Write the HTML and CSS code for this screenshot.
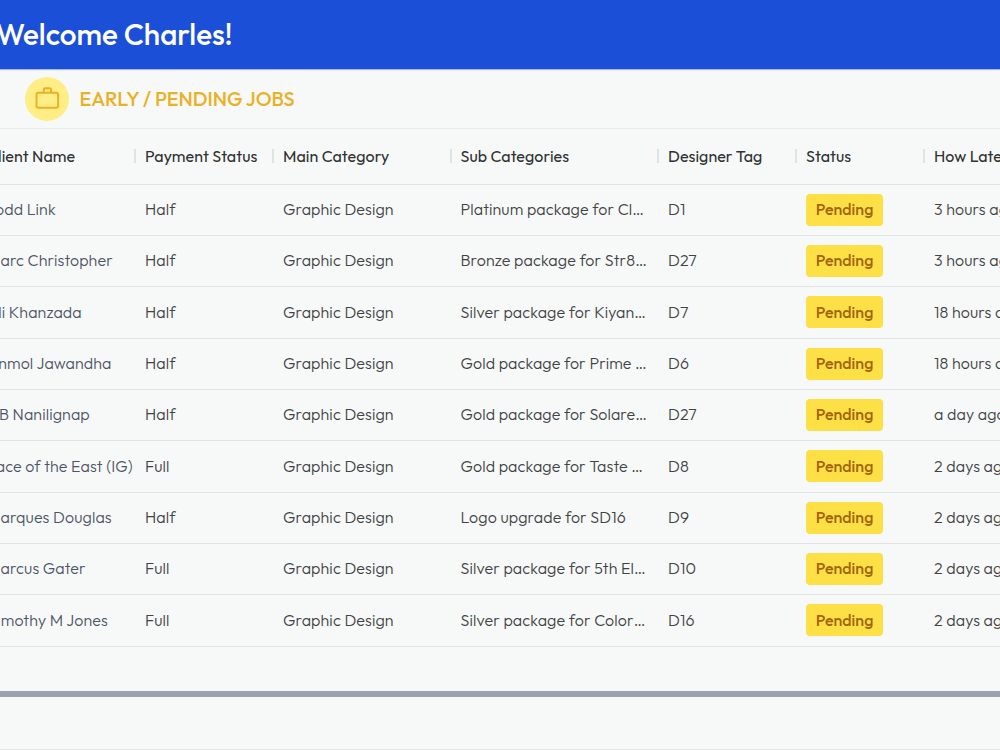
FILE: index.html
```html
<!DOCTYPE html>
<html lang="en">
	<head>
		<title>Early / Pending Jobs</title>
		<meta charset="utf-8">
		<meta name="viewport" content="width=device-width, initial-scale=1">
		<link rel="stylesheet" href="styles.css">
	</head>
	<body>
		<header class="topbar">
			<h1>Welcome Charles!</h1>
		</header>

		<main class="jobs">
			<div class="jobs-title">
				<span class="jobs-icon">
					<svg width="26" height="26" viewBox="0 0 26 26" fill="none" stroke="currentColor" stroke-width="2" stroke-linejoin="round">
						<rect x="2.5" y="6.8" width="21.6" height="15" rx="1.8"/>
						<path d="M9.8 6.6V3.4a1.2 1.2 0 0 1 1.2-1.2h4.8a1.2 1.2 0 0 1 1.2 1.2v3.2"/>
					</svg>
				</span>
				<h2>EARLY / PENDING JOBS</h2>
			</div>

			<div class="table">
				<div class="row head">
					<div class="client">Client Name</div>
					<div class="payment">Payment Status</div>
					<div class="category">Main Category</div>
					<div class="sub">Sub Categories</div>
					<div class="tag">Designer Tag</div>
					<div class="status">Status</div>
					<div class="late">How Late</div>
				</div>
				<div class="row">
					<div class="client">Todd Link</div>
					<div class="payment">Half</div>
					<div class="category">Graphic Design</div>
					<div class="sub">Platinum package for Cl…</div>
					<div class="tag">D1</div>
					<div class="status"><span class="badge">Pending</span></div>
					<div class="late">3 hours ago</div>
				</div>
				<div class="row">
					<div class="client">Marc Christopher</div>
					<div class="payment">Half</div>
					<div class="category">Graphic Design</div>
					<div class="sub">Bronze package for Str8…</div>
					<div class="tag">D27</div>
					<div class="status"><span class="badge">Pending</span></div>
					<div class="late">3 hours ago</div>
				</div>
				<div class="row">
					<div class="client">Ali Khanzada</div>
					<div class="payment">Half</div>
					<div class="category">Graphic Design</div>
					<div class="sub">Silver package for Kiyan…</div>
					<div class="tag">D7</div>
					<div class="status"><span class="badge">Pending</span></div>
					<div class="late">18 hours ago</div>
				</div>
				<div class="row">
					<div class="client">Anmol Jawandha</div>
					<div class="payment">Half</div>
					<div class="category">Graphic Design</div>
					<div class="sub">Gold package for Prime …</div>
					<div class="tag">D6</div>
					<div class="status"><span class="badge">Pending</span></div>
					<div class="late">18 hours ago</div>
				</div>
				<div class="row">
					<div class="client">DB Nanilignap</div>
					<div class="payment">Half</div>
					<div class="category">Graphic Design</div>
					<div class="sub">Gold package for Solare…</div>
					<div class="tag">D27</div>
					<div class="status"><span class="badge">Pending</span></div>
					<div class="late">a day ago</div>
				</div>
				<div class="row">
					<div class="client">Face of the East (IG)</div>
					<div class="payment">Full</div>
					<div class="category">Graphic Design</div>
					<div class="sub">Gold package for Taste …</div>
					<div class="tag">D8</div>
					<div class="status"><span class="badge">Pending</span></div>
					<div class="late">2 days ago</div>
				</div>
				<div class="row">
					<div class="client">Marques Douglas</div>
					<div class="payment">Half</div>
					<div class="category">Graphic Design</div>
					<div class="sub">Logo upgrade for SD16</div>
					<div class="tag">D9</div>
					<div class="status"><span class="badge">Pending</span></div>
					<div class="late">2 days ago</div>
				</div>
				<div class="row">
					<div class="client">Marcus Gater</div>
					<div class="payment">Full</div>
					<div class="category">Graphic Design</div>
					<div class="sub">Silver package for 5th El…</div>
					<div class="tag">D10</div>
					<div class="status"><span class="badge">Pending</span></div>
					<div class="late">2 days ago</div>
				</div>
				<div class="row">
					<div class="client">Timothy M Jones</div>
					<div class="payment">Full</div>
					<div class="category">Graphic Design</div>
					<div class="sub">Silver package for Color…</div>
					<div class="tag">D16</div>
					<div class="status"><span class="badge">Pending</span></div>
					<div class="late">2 days ago</div>
				</div>
			</div>

			<div class="scrollbar"></div>
			<div class="pager"></div>
		</main>
	</body>
</html>
```
FILE: styles.css
```css
/*
 * RESET
 */
* { margin: 0; padding: 0; box-sizing: border-box; }
html, body { height: 100%; overflow: hidden; }
body {
	font-family: Outfit, Lato, sans-serif;
	font-size: 16px;
	font-weight: 350;
	color: #404243;
	background: #f7f9f8;
}

/*
 * TOP BAR
 */
.topbar {
	display: flex; align-items: center;
	height: 69px;
	padding-bottom: 1px;
	background: #1c4fd8;
	box-shadow: 0 1px 1px #a9b9e6;
	color: #fff;
}
.topbar h1 {
	margin-left: -4px;
	font-size: 29.6px; font-weight: 500;
	white-space: nowrap;
}

/*
 * TITLE
 */
.jobs-title {
	display: flex; align-items: center; gap: 10.5px;
	height: 60px;
	padding-left: 25px;
	border-bottom: 1px solid #e9ebeb;
	color: #eab126;
}
.jobs-icon {
	display: flex; align-items: center; justify-content: center;
	width: 44px; height: 44px;
	border-radius: 50%;
	background: #feee85;
}
.jobs-title h2 {
	font-size: 20px; font-weight: 550;
	letter-spacing: -0.06px;
	white-space: nowrap;
}

/*
 * TABLE
 */
.row {
	display: grid; align-items: center;
	grid-template-columns: 158px 138px 177.5px 207.5px 138px 128px 160px;
	width: 1107px; height: 51.35px;
	margin-left: -23px;
	border-bottom: 1px solid #e3e5e5;
}
.row > div {
	position: relative;
	padding: 0 0 1.2px 10px;
	letter-spacing: 0.1px;
	white-space: nowrap;
}
.row .client { color: #4d5465; }
.row .status { padding-bottom: 0; }
.head { height: 55.5px; font-weight: 450; }
.head > div, .head .status { padding-bottom: 0; letter-spacing: 0.06px; }
.head > div, .head .client { color: #2f3132; }

/* column resize handle */
.head > div + div::before {
	content: "";
	position: absolute; left: -1px; top: 50%;
	width: 2px; height: 14px; margin-top: -7px;
	background: #e1e3e3;
}

.badge {
	display: flex; align-items: center; justify-content: center;
	width: 77px; height: 32px;
	padding-bottom: 1.6px;
	border-radius: 4px;
	background: #fce046;
	color: #a1640b;
	font-weight: 500;
	letter-spacing: 0;
}

/*
 * FOOTER
 */
.scrollbar { height: 6px; margin-top: 44.35px; background: #9ca3af; }
.pager { height: 53px; border-bottom: 1px solid #e3e5e5; }
```
